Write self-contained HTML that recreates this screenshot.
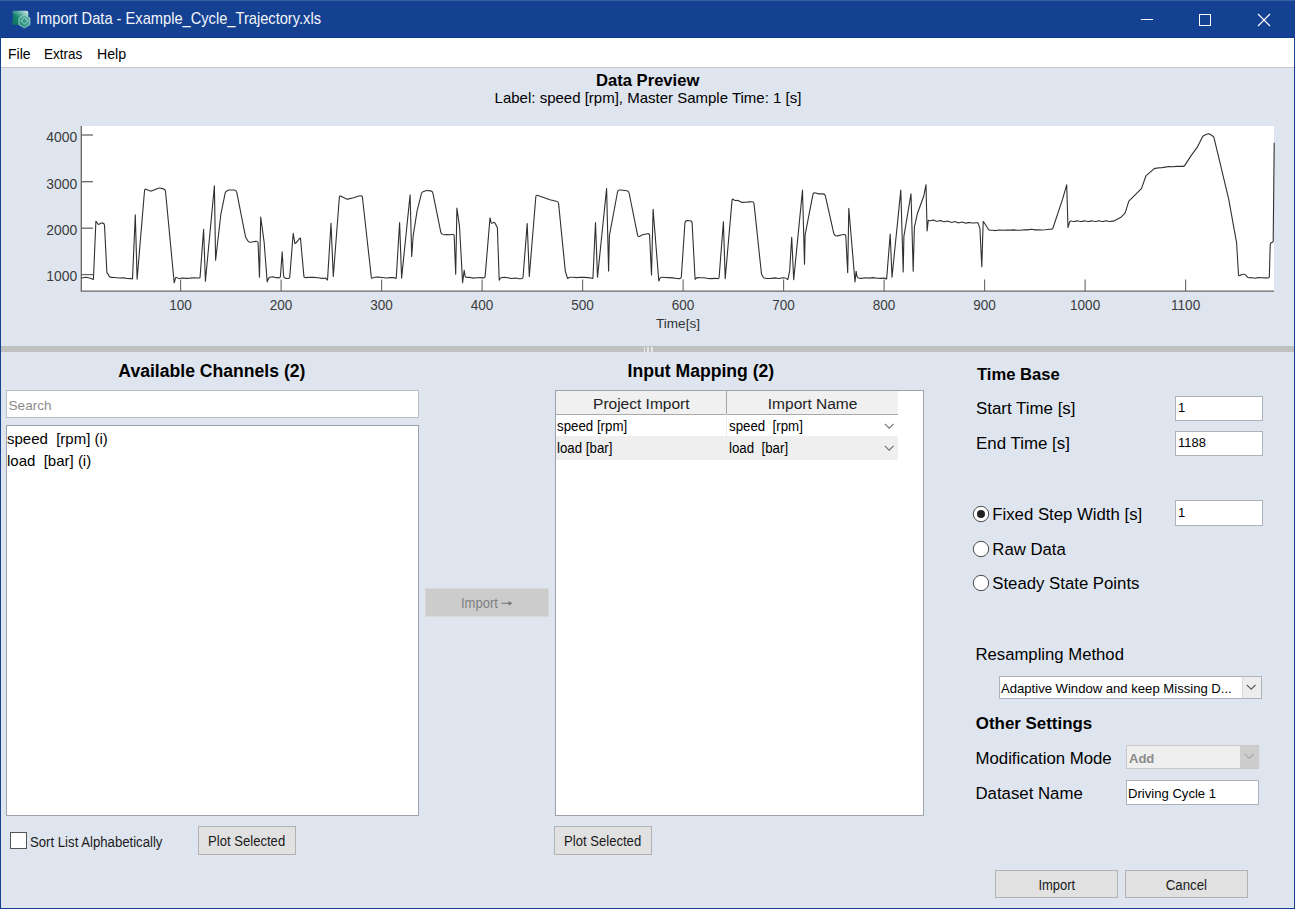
<!DOCTYPE html>
<html><head><meta charset="utf-8">
<style>
*{margin:0;padding:0;box-sizing:border-box}
html,body{width:1295px;height:909px;overflow:hidden;background:#DFE5EF;font-family:"Liberation Sans",sans-serif;color:#000}
.a{position:absolute;white-space:nowrap;line-height:normal}
</style></head><body>
<div class="a" style="left:0px;top:0px;width:1295px;height:909px;background:#154193"></div>
<div class="a" style="left:1px;top:68px;width:1293px;height:840px;background:#DFE5EF"></div>
<div class="a" style="left:0px;top:0px;width:1295px;height:1px;background:#3A5EA2"></div>
<div class="a" style="left:1px;top:37px;width:1293px;height:1px;background:#0E378A"></div>
<div class="a" style="left:1px;top:38px;width:1293px;height:29px;background:#fff"></div>
<div class="a" style="left:1px;top:67px;width:1293px;height:1px;background:#C8C8C8"></div>
<svg class="a" style="left:12px;top:10px" width="19" height="19" viewBox="0 0 19 19">
 <defs><linearGradient id="ig" x1="1" y1="0" x2="0" y2="1"><stop offset="0" stop-color="#E4F2EE"/><stop offset="0.35" stop-color="#5FB0A2"/><stop offset="0.6" stop-color="#16806F"/><stop offset="1" stop-color="#0E6E5E"/></linearGradient>
 <linearGradient id="hg" x1="1" y1="0" x2="0" y2="1"><stop offset="0" stop-color="#6DBBAE"/><stop offset="1" stop-color="#16806F"/></linearGradient></defs>
 <path d="M0.3 2.8 Q0.3 0.7 2.4 0.7 H14.2 Q16.3 0.7 16.3 2.8 V13 Q16.3 15 14.2 15 H2.4 Q0.3 15 0.3 13 V9 L1 8.4 V4 L0.3 3.6 Z" fill="url(#ig)"/>
 <path d="M12.45 5 L17.9 8.2 V14.6 L12.45 17.8 L7 14.6 V8.2 Z" fill="url(#hg)" stroke="#A8D8CE" stroke-width="0.9"/>
 <path d="M12.45 7.8 L15.6 11 L12.45 14.2 L9.3 11 Z" fill="#2E9886" stroke="#F0FAF7" stroke-width="0.9" stroke-dasharray="1.1 0.6"/>
</svg>
<div class="a" style="left:36.3px;top:10.41px;font-size:15.9px;font-weight:normal;color:#F4F6FA;"><span style="display:inline-block;transform:scaleX(0.922);transform-origin:left">Import Data - Example_Cycle_Trajectory.xls</span></div>
<svg class="a" style="left:1130px;top:0" width="165" height="38">
 <line x1="11" y1="19.5" x2="23" y2="19.5" stroke="#fff" stroke-width="1"/>
 <rect x="69.5" y="14.5" width="11" height="11" fill="none" stroke="#fff" stroke-width="1"/>
 <path d="M128 14 L140 26 M140 14 L128 26" stroke="#fff" stroke-width="1.1"/>
</svg>
<div class="a" style="left:8.2px;top:45.97px;font-size:14.4px;font-weight:normal;color:#000;"><span style="display:inline-block;transform:scaleX(0.97);transform-origin:left">File</span></div>
<div class="a" style="left:44px;top:45.97px;font-size:14.4px;font-weight:normal;color:#000;"><span style="display:inline-block;transform:scaleX(0.935);transform-origin:left">Extras</span></div>
<div class="a" style="left:96.5px;top:45.97px;font-size:14.4px;font-weight:normal;color:#000;"><span style="display:inline-block;transform:scaleX(0.985);transform-origin:left">Help</span></div>
<div class="a" style="left:347.70000000000005px;width:600px;text-align:center;top:70.78px;font-size:16.6px;font-weight:bold;color:#000;">Data Preview</div>
<div class="a" style="left:348px;width:600px;text-align:center;top:88.83px;font-size:15.0px;font-weight:normal;color:#000;">Label: speed [rpm], Master Sample Time: 1 [s]</div>
<svg class="a" style="left:0;top:0" width="1295" height="345">
<rect x="81" y="126" width="1193" height="165" fill="#fff"/>
<g stroke="#666" stroke-width="1.3" fill="none"><line x1="81.3" y1="126" x2="81.3" y2="291.5"/><line x1="81" y1="291.2" x2="1274" y2="291.2"/><line x1="81" y1="135" x2="93" y2="135"/><line x1="81" y1="181.7" x2="93" y2="181.7"/><line x1="81" y1="228.2" x2="93" y2="228.2"/><line x1="81" y1="274.6" x2="93" y2="274.6"/></g>
<g stroke="#666" stroke-width="1.1" fill="none"><line x1="180.6" y1="279.5" x2="180.6" y2="291"/><line x1="281.1" y1="279.5" x2="281.1" y2="291"/><line x1="381.6" y1="279.5" x2="381.6" y2="291"/><line x1="482.1" y1="279.5" x2="482.1" y2="291"/><line x1="582.6" y1="279.5" x2="582.6" y2="291"/><line x1="683.1" y1="279.5" x2="683.1" y2="291"/><line x1="783.6" y1="279.5" x2="783.6" y2="291"/><line x1="884.1" y1="279.5" x2="884.1" y2="291"/><line x1="984.6" y1="279.5" x2="984.6" y2="291"/><line x1="1085.1" y1="279.5" x2="1085.1" y2="291"/><line x1="1185.6" y1="279.5" x2="1185.6" y2="291"/></g>
<path d="M81.40,278.00 L86.20,277.30 L91.28,278.50 Q91.70,278.60 92.03,278.87 L92.55,279.30 Q93.40,280.00 93.45,278.90 L95.87,221.65 Q95.90,220.90 96.31,221.53 L97.78,223.76 Q98.60,225.00 99.65,223.95 L99.72,223.88 Q100.70,222.90 102.08,223.09 L102.55,223.15 Q104.40,223.40 104.49,225.26 L106.87,272.45 Q106.90,273.10 107.45,273.45 L107.45,273.45 Q108.00,273.80 108.23,274.41 L108.65,275.55 Q109.30,277.30 111.17,277.37 L114.25,277.47 L119.20,278.00 L123.33,277.85 L127.47,278.55 L131.26,278.60 Q131.60,278.60 131.91,278.74 L132.05,278.80 Q132.50,279.00 132.52,278.51 L135.30,214.70 L137.10,279.30 L144.54,190.57 Q144.70,188.60 146.51,189.39 L149.85,190.84 Q150.90,191.30 151.95,190.86 L158.42,188.18 Q159.10,187.90 159.81,188.06 L163.36,188.86 Q165.30,189.30 165.49,191.28 L174.20,282.80 L175.49,278.11 Q175.90,276.60 177.10,277.60 L177.37,277.83 Q178.30,278.60 179.49,278.43 L182.24,278.05 L186.18,278.40 L190.12,278.11 L194.06,277.68 L198.00,278.00 L199.00,278.05 Q200.00,278.10 200.07,277.10 L203.60,229.40 L205.40,281.20 L214.40,185.90 L215.60,260.30 L220.90,214.00 L225.23,192.91 Q225.50,191.60 226.68,190.99 L228.19,190.21 Q228.60,190.00 229.06,190.00 L234.18,190.00 Q236.30,190.00 236.71,192.08 L245.60,237.10 L247.74,240.83 Q248.70,242.50 250.60,242.20 L253.35,241.76 L255.86,241.35 Q258.00,241.00 258.09,243.17 L259.50,277.30 L260.70,217.10 L264.10,241.80 L267.17,281.63 Q267.20,282.00 267.33,281.65 L268.36,278.77 Q269.00,277.00 270.88,276.95 L272.77,276.90 L276.53,277.67 L278.42,277.88 Q280.30,278.10 280.44,276.21 L282.20,251.80 L283.58,275.97 Q283.70,278.10 285.82,278.35 L287.42,278.54 Q289.60,278.80 289.77,276.61 L293.20,233.30 L294.80,242.87 Q295.00,244.10 295.79,243.14 L299.72,238.34 Q300.40,237.50 300.50,238.57 L303.92,276.39 Q304.00,277.30 304.90,277.45 L305.80,277.60 L309.82,277.27 L313.84,277.39 L317.86,277.82 L321.88,278.33 L324.50,278.18 Q325.90,278.10 326.70,279.25 L327.02,279.71 Q327.50,280.40 327.55,279.56 L331.00,223.20 L333.30,276.50 L339.36,197.24 Q339.50,195.40 341.13,196.27 L345.99,198.86 Q346.80,199.30 347.70,199.10 L353.70,197.80 L357.95,196.22 L360.07,195.81 Q362.20,195.40 362.44,197.55 L371.35,277.44 Q371.50,278.80 372.65,278.05 L373.34,277.60 Q373.80,277.30 374.35,277.27 L377.98,277.08 L382.16,277.55 L386.34,277.93 L390.52,277.62 L393.83,277.60 Q394.70,277.60 395.38,278.14 L395.45,278.20 Q396.20,278.80 396.26,277.84 L399.60,222.50 L401.60,278.10 L410.10,194.70 L411.70,256.40 L413.20,235.60 L417.10,210.90 L421.36,193.78 Q421.70,192.40 423.02,191.86 L425.85,190.68 Q426.30,190.50 426.78,190.55 L430.50,190.91 Q432.50,191.10 432.90,193.07 L440.78,232.20 Q441.00,233.30 441.94,233.91 L442.59,234.34 Q443.30,234.80 444.15,234.72 L446.90,234.46 L450.50,234.81 L452.30,234.45 Q454.10,234.10 454.17,235.93 L455.70,274.20 L456.90,208.10 L459.50,226.30 L462.60,282.70 L464.20,270.30 L465.01,275.64 Q465.30,277.60 467.27,277.42 L469.24,277.25 L473.18,278.16 L477.12,277.69 L481.06,277.64 L483.03,277.87 Q485.00,278.10 485.16,276.12 L490.00,217.80 L491.08,222.27 Q491.50,224.00 492.88,222.87 L492.90,222.85 Q494.30,221.70 495.11,223.32 L497.23,227.56 Q497.40,227.90 497.41,228.28 L499.18,279.95 Q499.20,280.40 499.39,279.99 L499.85,279.00 Q500.50,277.60 502.04,277.52 L504.23,277.42 L507.97,277.81 L511.70,278.52 L515.43,278.08 L519.17,278.68 L521.03,278.74 Q522.90,278.80 523.05,276.94 L527.20,223.60 L529.30,276.50 L535.83,196.74 Q536.00,194.70 537.92,195.40 L549.90,199.80 L554.15,200.84 L556.40,201.24 Q558.40,201.60 558.60,203.63 L565.30,271.10 L567.29,277.75 Q567.60,278.80 568.40,278.05 L568.45,278.01 Q569.20,277.30 570.23,277.30 L572.93,277.31 L576.67,277.61 L580.40,277.26 L584.13,277.39 L587.87,277.67 L591.30,278.07 Q591.60,278.10 591.87,278.24 L592.25,278.45 Q592.90,278.80 592.93,278.06 L595.50,222.50 L597.50,277.30 L606.60,188.50 L608.60,271.10 L609.40,235.60 L617.62,191.52 Q617.90,190.00 619.45,190.00 L621.00,190.00 L626.77,190.82 Q628.70,191.10 629.09,193.01 L637.59,235.09 Q638.00,237.10 639.83,236.18 L642.60,234.80 L647.41,233.75 Q649.50,233.30 649.60,235.44 L651.50,275.00 L653.10,209.30 L658.77,280.83 Q658.80,281.20 658.92,280.85 L659.59,278.98 Q660.30,277.00 662.38,277.27 L664.48,277.54 L668.66,277.65 L672.84,277.89 L677.02,278.53 L679.11,278.66 Q681.20,278.80 681.34,276.71 L684.95,222.69 Q685.10,220.50 687.30,220.63 L689.83,220.77 Q692.00,220.90 692.11,223.07 L695.05,278.70 Q695.10,279.60 695.64,278.88 L695.85,278.60 Q696.60,277.60 697.85,277.65 L700.33,277.75 L704.07,277.80 L707.80,278.49 L711.53,278.60 L715.27,278.34 L717.13,278.57 Q719.00,278.80 719.14,276.93 L723.40,221.70 L725.20,278.80 L732.06,200.09 Q732.20,198.50 733.48,199.45 L734.33,200.08 Q735.30,200.80 736.45,200.45 L736.45,200.45 Q737.60,200.10 738.63,200.72 L740.82,202.05 Q741.40,202.40 742.08,202.37 L745.53,202.21 L749.67,201.89 L751.73,201.75 Q753.80,201.60 754.02,203.66 L761.46,273.79 Q761.50,274.20 761.71,274.55 L763.17,276.92 Q763.90,278.10 765.28,278.24 L767.63,278.48 L771.37,278.33 L775.10,277.89 L778.49,278.52 Q778.83,278.58 779.17,278.50 L782.57,277.72 L785.17,277.98 Q786.30,278.10 787.00,278.99 L787.05,279.05 Q787.80,280.00 788.03,278.81 L789.70,270.40 L791.70,237.20 L793.70,279.70 L802.50,190.10 L804.50,264.20 L805.10,234.90 L812.89,194.55 Q813.30,192.40 815.41,192.99 L818.70,193.90 L822.81,193.90 Q824.90,193.90 825.36,195.94 L833.82,233.65 Q834.10,234.90 835.24,235.49 L835.57,235.67 Q836.40,236.10 837.31,235.89 L841.05,235.02 L843.59,234.52 Q845.70,234.10 845.81,236.25 L847.70,272.70 L848.80,208.30 L855.00,282.00 L856.10,271.20 L856.96,276.14 Q857.30,278.10 859.29,278.23 L861.27,278.36 L865.24,277.75 L869.21,278.09 L873.19,277.64 L877.16,278.27 L881.13,278.36 L884.14,278.16 Q885.10,278.10 885.85,278.70 L885.85,278.70 Q886.60,279.30 886.68,278.34 L890.20,234.10 L892.00,277.30 L900.80,190.10 L903.20,271.90 L903.90,236.40 L911.00,193.90 L913.20,271.20 L914.40,227.10 L917.50,213.20 L923.70,196.30 L926.00,184.70 L927.10,231.00 L928.23,220.87 Q928.30,220.20 928.91,220.49 L929.09,220.57 Q929.52,220.77 930.00,220.75 L930.74,220.72 L931.96,220.31 L932.84,220.13 Q933.18,220.06 933.52,220.13 L934.40,220.32 L935.62,220.91 L936.51,221.21 Q936.83,221.31 937.18,221.29 L938.05,221.21 L939.27,220.80 L940.14,220.65 Q940.49,220.59 940.84,220.67 L941.71,220.89 L942.93,221.48 L943.81,221.75 Q944.15,221.85 944.50,221.81 L945.37,221.70 L946.59,221.28 L947.46,221.16 Q947.81,221.12 948.15,221.21 L949.03,221.46 L950.25,222.06 L951.12,222.29 Q951.47,222.38 951.82,222.32 L952.68,222.19 L953.90,221.77 L954.78,221.68 Q955.12,221.65 955.45,221.76 L956.34,222.04 L957.56,222.63 L958.21,222.78 Q958.78,222.91 959.34,222.72 L960.00,222.50 L961.21,222.21 L962.08,222.11 Q962.41,222.08 962.74,222.17 L963.62,222.44 L964.83,222.96 L965.70,223.10 Q966.03,223.16 966.36,223.07 L967.24,222.85 L968.45,222.60 L969.65,222.57 L970.86,222.74 L972.07,222.97 L973.27,223.06 L974.48,222.96 L975.69,222.79 L976.89,222.77 L977.50,222.89 Q978.10,223.00 978.29,223.58 L979.90,228.40 L981.80,266.60 L983.18,221.90 Q983.20,221.20 983.58,221.79 L988.17,228.99 Q989.00,230.30 990.55,230.31 L992.53,230.32 L996.06,230.58 L999.58,229.96 L1003.11,230.30 L1006.64,230.14 L1010.17,230.08 L1013.69,229.91 L1017.22,230.24 L1020.75,230.29 L1024.28,229.77 L1027.81,229.91 L1031.33,229.26 L1034.86,229.85 L1038.39,229.75 L1041.92,230.04 L1045.44,229.82 L1048.97,229.23 L1050.74,229.32 Q1052.50,229.40 1053.06,227.72 L1062.50,199.40 L1066.70,184.90 L1068.00,227.50 L1069.63,221.79 Q1069.80,221.20 1070.40,221.07 L1070.54,221.04 Q1071.01,220.93 1071.47,221.06 L1072.22,221.27 L1073.42,221.53 L1074.63,221.46 L1075.84,221.13 L1077.05,220.87 L1078.26,220.94 L1079.47,221.28 L1080.67,221.54 L1081.88,221.45 L1083.09,221.11 L1084.30,220.86 L1085.51,220.95 L1086.72,221.30 L1087.92,221.54 L1089.13,221.44 L1090.34,221.10 L1091.55,220.86 L1092.76,220.97 L1093.97,221.31 L1095.17,221.54 L1096.38,221.43 L1097.59,221.08 L1098.80,220.86 L1100.01,220.98 L1101.22,221.32 L1102.42,221.55 L1103.63,221.42 L1104.84,221.07 L1106.05,220.85 L1107.26,220.99 L1108.47,221.34 L1109.67,221.55 L1110.88,221.40 L1111.77,221.15 Q1112.09,221.05 1112.43,221.09 L1112.70,221.13 Q1113.30,221.20 1113.85,220.93 L1120.60,217.60 L1124.78,213.32 Q1125.10,213.00 1125.24,212.57 L1128.66,201.65 Q1128.80,201.20 1129.13,200.87 L1135.10,194.90 L1141.21,188.79 Q1141.50,188.50 1141.64,188.12 L1145.82,176.30 Q1146.00,175.80 1146.40,175.45 L1153.94,168.90 Q1154.40,168.50 1155.01,168.40 L1158.03,167.92 L1161.67,167.74 L1165.30,167.10 L1169.06,166.50 L1172.82,166.82 L1176.58,166.41 L1180.34,166.24 L1182.41,166.38 Q1184.10,166.50 1185.01,165.08 L1191.10,155.60 L1197.00,147.70 L1202.56,136.68 Q1203.00,135.80 1203.92,135.44 L1207.52,134.04 Q1208.90,133.50 1210.13,134.33 L1212.96,136.24 Q1213.80,136.80 1214.03,137.78 L1228.70,199.20 L1236.60,242.80 L1238.50,274.72 Q1238.60,276.40 1240.02,275.50 L1241.23,274.73 Q1241.60,274.50 1242.04,274.46 L1243.60,274.29 Q1245.50,274.10 1246.37,275.80 L1246.66,276.37 Q1247.50,278.00 1249.32,277.78 L1251.13,277.56 L1254.77,278.27 L1258.40,277.63 L1262.03,277.75 L1265.67,277.89 L1267.48,277.95 Q1269.30,278.00 1269.35,276.18 L1270.26,244.26 Q1270.30,242.80 1271.75,242.60 L1271.75,242.60 Q1273.20,242.40 1273.21,240.94 L1274.20,142.80" fill="none" stroke="#303030" stroke-width="1.1" stroke-linejoin="round"/>
<g font-size="14.6" fill="#3C3C3C" text-anchor="end" font-family="Liberation Sans"><text transform="translate(77.2,142.0) scale(0.952,1)">4000</text><text transform="translate(77.2,188.6) scale(0.952,1)">3000</text><text transform="translate(77.2,235.0) scale(0.952,1)">2000</text><text transform="translate(77.2,281.40000000000003) scale(0.952,1)">1000</text></g>
<g font-size="14.6" fill="#3C3C3C" text-anchor="middle" font-family="Liberation Sans"><text transform="translate(180.6,310) scale(0.93,1)">100</text><text transform="translate(281.1,310) scale(0.93,1)">200</text><text transform="translate(381.6,310) scale(0.93,1)">300</text><text transform="translate(482.1,310) scale(0.93,1)">400</text><text transform="translate(582.6,310) scale(0.93,1)">500</text><text transform="translate(683.1,310) scale(0.93,1)">600</text><text transform="translate(783.6,310) scale(0.93,1)">700</text><text transform="translate(884.1,310) scale(0.93,1)">800</text><text transform="translate(984.6,310) scale(0.93,1)">900</text><text transform="translate(1085.1,310) scale(0.93,1)">1000</text><text transform="translate(1185.6,310) scale(0.93,1)">1100</text></g>
<text x="678" y="328" font-size="13.6" text-anchor="middle" fill="#333" font-family="Liberation Sans">Time[s]</text>
</svg>
<div class="a" style="left:1px;top:346px;width:1293px;height:6px;background:#C0C0C0"></div>
<div class="a" style="left:643.5px;top:347px;width:1.5px;height:5px;background:#E6E6E6"></div>
<div class="a" style="left:647.2px;top:347px;width:1.5px;height:5px;background:#E6E6E6"></div>
<div class="a" style="left:651px;top:347px;width:1.5px;height:5px;background:#E6E6E6"></div>
<div class="a" style="left:-88.1px;width:600px;text-align:center;top:360.87px;font-size:17.6px;font-weight:bold;color:#000;">Available Channels (2)</div>
<div class="a" style="left:6px;top:390px;width:413px;height:28px;background:#fff;border:1px solid #BABEC5"></div>
<div class="a" style="left:8.5px;top:397.69px;font-size:13.6px;font-weight:normal;color:#8C8C8C;">Search</div>
<div class="a" style="left:6px;top:425px;width:413px;height:391px;background:#fff;border:1px solid #9DA3AC"></div>
<div class="a" style="left:7px;top:429.53px;font-size:15.0px;font-weight:normal;color:#000;">speed&nbsp; [rpm] (i)</div>
<div class="a" style="left:7px;top:451.82px;font-size:15.0px;font-weight:normal;color:#000;">load&nbsp; [bar] (i)</div>
<div class="a" style="left:425px;top:588px;width:124px;height:29px;background:#CCCCCC;border:1px solid #D8D8D8"></div>
<div class="a" style="left:460.8px;top:594.51px;font-size:14.69px;font-weight:normal;color:#7F7F7F;"><span style="display:inline-block;transform:scaleX(0.885);transform-origin:left">Import</span></div>
<svg class="a" style="left:500px;top:598px" width="14" height="10"><path d="M1.5 5.3 H11.5" stroke="#7A7A7A" stroke-width="1.1"/><path d="M8.6 2.9 L12.4 5.3 L8.6 7.7 Z" fill="#7A7A7A"/></svg>
<div class="a" style="left:400.9px;width:600px;text-align:center;top:361.27px;font-size:17.6px;font-weight:bold;color:#000;">Input Mapping (2)</div>
<div class="a" style="left:555px;top:390px;width:369px;height:426px;background:#fff;border:1px solid #9DA3AC"></div>
<div class="a" style="left:556px;top:391px;width:342px;height:24px;background:#F0F0F0;border-bottom:1px solid #A9A9A9"></div>
<div class="a" style="left:726px;top:391px;width:1px;height:23px;background:#A5A5A5"></div>
<div class="a" style="left:726px;top:414px;width:1px;height:22px;background:#EBEBEB"></div>
<div class="a" style="left:556px;top:436px;width:342px;height:24px;background:#EFEFEF"></div>
<div class="a" style="left:341.29999999999995px;width:600px;text-align:center;top:394.87px;font-size:15.5px;font-weight:normal;color:#222;">Project Import</div>
<div class="a" style="left:512.6px;width:600px;text-align:center;top:394.87px;font-size:15.5px;font-weight:normal;color:#222;">Import Name</div>
<div class="a" style="left:556.5px;top:417.40px;font-size:15.03px;font-weight:normal;color:#000;"><span style="display:inline-block;transform:scaleX(0.885);transform-origin:left">speed [rpm]</span></div>
<div class="a" style="left:556.5px;top:439.40px;font-size:15.03px;font-weight:normal;color:#000;"><span style="display:inline-block;transform:scaleX(0.885);transform-origin:left">load [bar]</span></div>
<div class="a" style="left:729px;top:417.40px;font-size:15.03px;font-weight:normal;color:#000;"><span style="display:inline-block;transform:scaleX(0.885);transform-origin:left">speed&nbsp; [rpm]</span></div>
<div class="a" style="left:729px;top:439.40px;font-size:15.03px;font-weight:normal;color:#000;"><span style="display:inline-block;transform:scaleX(0.885);transform-origin:left">load&nbsp; [bar]</span></div>
<svg class="a" style="left:884px;top:422.5px" width="11" height="7"><path d="M0.8 0.8 L5.2 5.2 L9.6 0.8" fill="none" stroke="#707070" stroke-width="1.1"/></svg>
<svg class="a" style="left:884px;top:444.8px" width="11" height="7"><path d="M0.8 0.8 L5.2 5.2 L9.6 0.8" fill="none" stroke="#707070" stroke-width="1.1"/></svg>
<div class="a" style="left:977px;top:364.78px;font-size:16.6px;font-weight:bold;color:#000;">Time Base</div>
<div class="a" style="left:976px;top:399.31px;font-size:16.9px;font-weight:normal;color:#000;">Start Time [s]</div>
<div class="a" style="left:976px;top:434.41px;font-size:16.9px;font-weight:normal;color:#000;">End Time [s]</div>
<div class="a" style="left:1175px;top:396px;width:88px;height:25px;background:#fff;border:1px solid #ADB2BB"></div>
<div class="a" style="left:1175px;top:431px;width:88px;height:25px;background:#fff;border:1px solid #ADB2BB"></div>
<div class="a" style="left:1175px;top:500px;width:88px;height:26px;background:#fff;border:1px solid #ADB2BB"></div>
<div class="a" style="left:1177.5px;top:400.38px;font-size:13.5px;font-weight:normal;color:#000;"><span style="display:inline-block;transform:scaleX(0.96);transform-origin:left">1</span></div>
<div class="a" style="left:1177.5px;top:435.38px;font-size:13.5px;font-weight:normal;color:#000;"><span style="display:inline-block;transform:scaleX(0.96);transform-origin:left">1188</span></div>
<div class="a" style="left:1177.5px;top:505.18px;font-size:13.5px;font-weight:normal;color:#000;"><span style="display:inline-block;transform:scaleX(0.96);transform-origin:left">1</span></div>
<svg class="a" style="left:971.6px;top:505px" width="18" height="18"><circle cx="9" cy="9" r="7.7" fill="#fff" stroke="#4A4A4A" stroke-width="1"/><circle cx="9" cy="9" r="4" fill="#222"/></svg>
<svg class="a" style="left:971.6px;top:539.7px" width="18" height="18"><circle cx="9" cy="9" r="7.7" fill="#fff" stroke="#4A4A4A" stroke-width="1"/></svg>
<svg class="a" style="left:971.6px;top:574.3px" width="18" height="18"><circle cx="9" cy="9" r="7.7" fill="#fff" stroke="#4A4A4A" stroke-width="1"/></svg>
<div class="a" style="left:992.3px;top:504.94px;font-size:16.75px;font-weight:normal;color:#000;">Fixed Step Width [s]</div>
<div class="a" style="left:992.3px;top:539.54px;font-size:16.75px;font-weight:normal;color:#000;">Raw Data</div>
<div class="a" style="left:992.3px;top:573.64px;font-size:16.75px;font-weight:normal;color:#000;">Steady State Points</div>
<div class="a" style="left:975.5px;top:644.59px;font-size:16.7px;font-weight:normal;color:#000;">Resampling Method</div>
<div class="a" style="left:999px;top:676px;width:263px;height:23px;background:#fff;border:1px solid #ADB2BB"></div>
<div class="a" style="left:1242px;top:677px;width:19px;height:21px;background:#EDEDED;border-left:1px solid #DADADA"></div>
<div class="a" style="left:1001px;top:681.24px;font-size:13.1px;font-weight:normal;color:#000;">Adaptive Window and keep Missing D...</div>
<svg class="a" style="left:1246px;top:684px" width="11" height="7"><path d="M0.8 0.8 L5.2 5.2 L9.6 0.8" fill="none" stroke="#555" stroke-width="1.1"/></svg>
<div class="a" style="left:975.8px;top:714.41px;font-size:16.9px;font-weight:bold;color:#000;">Other Settings</div>
<div class="a" style="left:975.5px;top:749.40px;font-size:16.8px;font-weight:normal;color:#000;">Modification Mode</div>
<div class="a" style="left:1126px;top:745px;width:133px;height:24px;background:#EFEFEF;border:1px solid #C8C8C8"></div>
<div class="a" style="left:1240px;top:746px;width:18px;height:22px;background:#CDCDCD"></div>
<div class="a" style="left:1129px;top:751.24px;font-size:13px;font-weight:bold;color:#8A8A8A;">Add</div>
<svg class="a" style="left:1244px;top:753px" width="11" height="7"><path d="M0.8 0.8 L5.2 5.2 L9.6 0.8" fill="none" stroke="#A8A8A8" stroke-width="1.1"/></svg>
<div class="a" style="left:975.5px;top:784.40px;font-size:16.8px;font-weight:normal;color:#000;">Dataset Name</div>
<div class="a" style="left:1126px;top:780px;width:133px;height:25px;background:#fff;border:1px solid #ADB2BB"></div>
<div class="a" style="left:1128px;top:786.14px;font-size:13.1px;font-weight:normal;color:#000;">Driving Cycle 1</div>
<div class="a" style="left:995px;top:870px;width:123px;height:28px;background:#E1E1E1;border:1px solid #B2B2B2"></div>
<div class="a" style="left:756.5px;width:600px;text-align:center;top:876.51px;font-size:14.689999999999998px;font-weight:normal;color:#1A1A1A;"><span style="display:inline-block;transform:scaleX(0.885);transform-origin:center">Import</span></div>
<div class="a" style="left:1125px;top:870px;width:123px;height:28px;background:#E1E1E1;border:1px solid #B2B2B2"></div>
<div class="a" style="left:886.5px;width:600px;text-align:center;top:876.20px;font-size:15.029px;font-weight:normal;color:#1A1A1A;"><span style="display:inline-block;transform:scaleX(0.885);transform-origin:center">Cancel</span></div>
<div class="a" style="left:198px;top:826px;width:98px;height:29px;background:#E1E1E1;border:1px solid #B2B2B2"></div>
<div class="a" style="left:-53.0px;width:600px;text-align:center;top:833.10px;font-size:14.802999999999999px;font-weight:normal;color:#1A1A1A;"><span style="display:inline-block;transform:scaleX(0.885);transform-origin:center">Plot Selected</span></div>
<div class="a" style="left:554px;top:826px;width:98px;height:29px;background:#E1E1E1;border:1px solid #B2B2B2"></div>
<div class="a" style="left:303.0px;width:600px;text-align:center;top:833.10px;font-size:14.802999999999999px;font-weight:normal;color:#1A1A1A;"><span style="display:inline-block;transform:scaleX(0.885);transform-origin:center">Plot Selected</span></div>
<div class="a" style="left:10px;top:832px;width:17px;height:17px;background:#fff;border:1px solid #555"></div>
<div class="a" style="left:29.8px;top:832.54px;font-size:15.09px;font-weight:normal;color:#1A1A1A;"><span style="display:inline-block;transform:scaleX(0.873);transform-origin:left">Sort List Alphabetically</span></div>
</body></html>
